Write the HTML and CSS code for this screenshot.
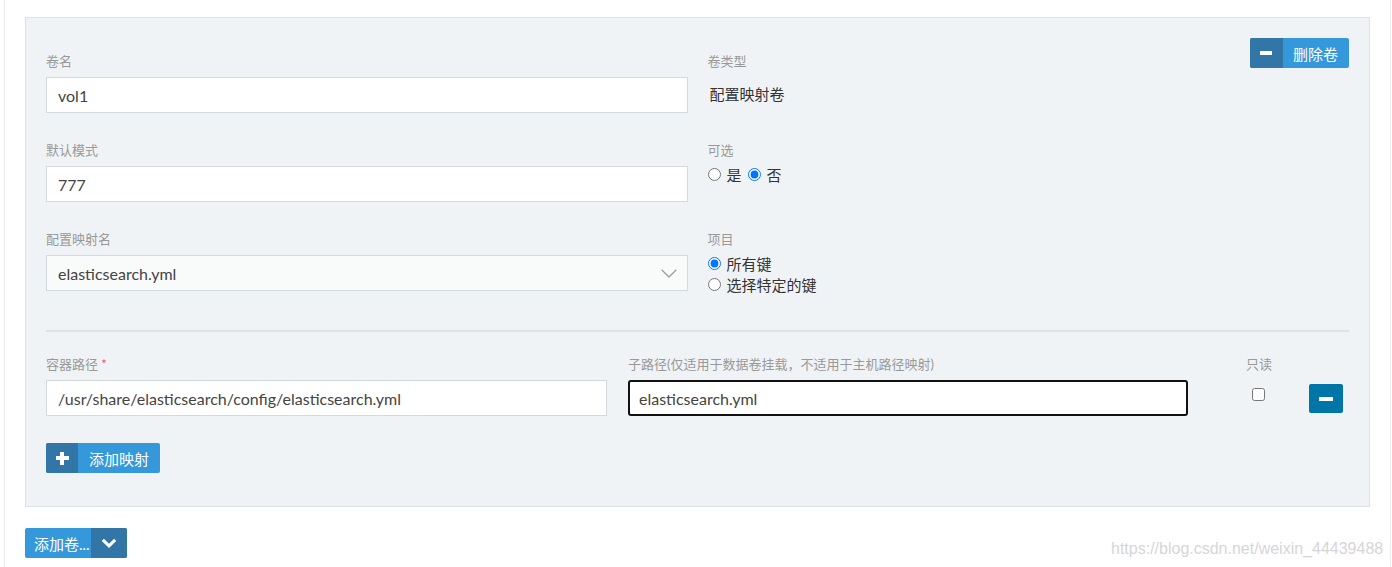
FILE: index.html
```html
<!DOCTYPE html>
<html lang="zh-CN">
<head>
<meta charset="utf-8">
<title>卷配置</title>
<link rel="stylesheet" href="styles.css">
</head>
<body>
<div class="page">
  <div class="panel">
    <div class="top-grid">
      <div class="field first">
        <label class="lbl">卷名</label>
        <div class="input">vol1</div>
      </div>
      <div class="field first-right">
        <div class="info">
          <label class="lbl">卷类型</label>
          <div class="value">配置映射卷</div>
        </div>
        <button class="btn split-btn del">
          <span class="btn-icon"><span class="minus"></span></span>
          <span class="btn-text">删除卷</span>
        </button>
      </div>

      <div class="field">
        <label class="lbl">默认模式</label>
        <div class="input">777</div>
      </div>
      <div class="field">
        <label class="lbl">可选</label>
        <div class="radios inline">
          <label class="opt"><input type="radio" name="opt"><span>是</span></label>
          <label class="opt"><input type="radio" name="opt" checked><span>否</span></label>
        </div>
      </div>

      <div class="field">
        <label class="lbl">配置映射名</label>
        <div class="input select">
          <span>elasticsearch.yml</span>
          <svg class="chev" width="16" height="9" viewBox="0 0 16 9"><path d="M0.7 0.7 L8 8 L15.3 0.7" fill="none" stroke="#9aa0a3" stroke-width="1.3"/></svg>
        </div>
      </div>
      <div class="field">
        <label class="lbl">项目</label>
        <div class="radios stack">
          <label class="opt"><input type="radio" name="items" checked><span>所有键</span></label>
          <label class="opt"><input type="radio" name="items"><span>选择特定的键</span></label>
        </div>
      </div>
    </div>

    <div class="divider"></div>

    <div class="map-row">
      <div class="field">
        <label class="lbl">容器路径 <span class="req">*</span></label>
        <div class="input">/usr/share/elasticsearch/config/elasticsearch.yml</div>
      </div>
      <div class="field">
        <label class="lbl">子路径(仅适用于数据卷挂载，不适用于主机路径映射)</label>
        <div class="input focused">elasticsearch.yml</div>
      </div>
      <div class="field ro">
        <label class="lbl">只读</label>
        <input class="chk" type="checkbox">
      </div>
      <div class="field rm">
        <button class="btn rm-btn"><span class="minus"></span></button>
      </div>
    </div>

    <button class="btn split-btn add-map">
      <span class="btn-icon"><span class="plus"></span></span>
      <span class="btn-text">添加映射</span>
    </button>
  </div>

  <button class="btn split-btn add-vol">
    <span class="btn-text">添加卷...</span>
    <span class="btn-icon caret">
      <svg width="16" height="10" viewBox="0 0 16 10"><path d="M1.8 1.8 L8 7.8 L14.2 1.8" fill="none" stroke="#fff" stroke-width="3"/></svg>
    </span>
  </button>
</div>
<div class="watermark">https://blog.csdn.net/weixin_44439488</div>
</body>
</html>
```

FILE: styles.css
```css
html, body {
  margin: 0;
  padding: 0;
  background: #fff;
}

body {
  font-family: "Lato", "Noto Sans CJK SC", sans-serif;
  font-size: 14px;
  color: #444;
  height: 567px;
  overflow: hidden;
  position: relative;
}

.page {
  margin-left: 4px;
  width: 1387px;
  box-sizing: border-box;
  height: 567px;
  border-left: 1px solid #ececec;
  border-right: 1px solid #ececec;
  padding: 17px 20px 0 20px;
}

.panel {
  background: #f0f3f5;
  border: 1px solid #dce2e5;
  padding: 20px 20px 33px 20px;
}

.top-grid {
  display: grid;
  grid-template-columns: 1fr 1fr;
  column-gap: 20px;
  row-gap: 28px;
}

.field {
  display: flex;
  flex-direction: column;
}

.field.first {
  padding-top: 14px;
}

.first-right {
  flex-direction: row;
  justify-content: space-between;
  align-items: flex-start;
}

.first-right .info {
  padding-top: 14px;
  display: flex;
  flex-direction: column;
}

.lbl {
  display: block;
  font-size: 13px;
  line-height: 18px;
  color: #999;
  margin-bottom: 7px;
}

.req {
  color: #e25757;
}

.value {
  font-size: 15px;
  line-height: 34px;
  color: #333;
  padding-left: 2px;
}

.input {
  height: 36px;
  box-sizing: border-box;
  border: 1px solid #d3dadd;
  background: #fff;
  padding: 0 11px;
  display: flex;
  align-items: center;
  font-size: 16px;
  color: #444;
  white-space: nowrap;
}

.input.select {
  background: #f9fbfb;
  justify-content: space-between;
}

.chev {
  margin-right: -1px;
}

.input.focused {
  border: 2px solid #111;
  border-radius: 3px;
  padding: 0 9px;
}

.radios.inline {
  display: flex;
  align-items: center;
  height: 18px;
  gap: 6px;
  margin-top: -1px;
}

.radios.stack {
  display: flex;
  flex-direction: column;
  margin-top: -2px;
}

.radios.stack .opt {
  height: 21px;
}

.opt {
  display: inline-flex;
  align-items: center;
  gap: 6px;
  font-size: 15px;
  color: #333;
}

.opt input {
  margin: 0;
  width: 13px;
  height: 13px;
}

.btn {
  border: none;
  padding: 0;
  margin: 0;
  cursor: pointer;
  font-family: inherit;
}

.split-btn {
  display: inline-flex;
  height: 30px;
  border-radius: 2px;
  overflow: hidden;
  background: #3598db;
  color: #fff;
  align-self: flex-start;
}

.btn-icon {
  width: 33px;
  background: #3276a8;
  display: flex;
  align-items: center;
  justify-content: center;
}

.btn-text {
  display: flex;
  align-items: center;
  padding: 0 9px 0 9px;
  font-size: 15px;
}

.del .btn-text {
  padding: 0 11px 0 10px;
}

.minus {
  display: block;
  width: 12px;
  height: 4px;
  background: #fff;
}

.plus {
  display: block;
  width: 13px;
  height: 13px;
  background:
    linear-gradient(#fff, #fff) center / 13px 4px no-repeat,
    linear-gradient(#fff, #fff) center / 4px 13px no-repeat;
}

.divider {
  height: 2px;
  background: #dce2e5;
  margin-top: 35px;
}

.map-row {
  display: grid;
  grid-template-columns: 561px 560px 79px 34px;
  column-gap: 21px;
  margin-top: 23px;
}

.field.ro {
  padding-left: 37px;
}

.chk {
  margin: 8px 0 0 6px;
  width: 13px;
  height: 13px;
}

.field.rm {
  padding-top: 29px;
}

.rm-btn {
  width: 34px;
  height: 29px;
  background: #0075a8;
  border-radius: 2px;
  display: flex;
  align-items: center;
  justify-content: center;
}

.rm-btn .minus {
  width: 14px;
}

.add-map {
  margin-top: 27px;
}

.add-map .btn-icon {
  width: 32px;
}

.add-map .btn-text {
  padding: 0 11px 0 11px;
}

.add-vol {
  margin-top: 21px;
  height: 30px;
}

.add-vol .btn-text {
  width: 66px;
  box-sizing: border-box;
  padding: 0 0 0 9px;
  white-space: nowrap;
  overflow: hidden;
}

.add-vol .caret {
  width: 36px;
}

.watermark {
  position: absolute;
  left: 1111px;
  top: 540px;
  font-family: "Liberation Sans", Arial, sans-serif;
  font-size: 16px;
  line-height: 18px;
  color: #d6d6d6;
}
```
